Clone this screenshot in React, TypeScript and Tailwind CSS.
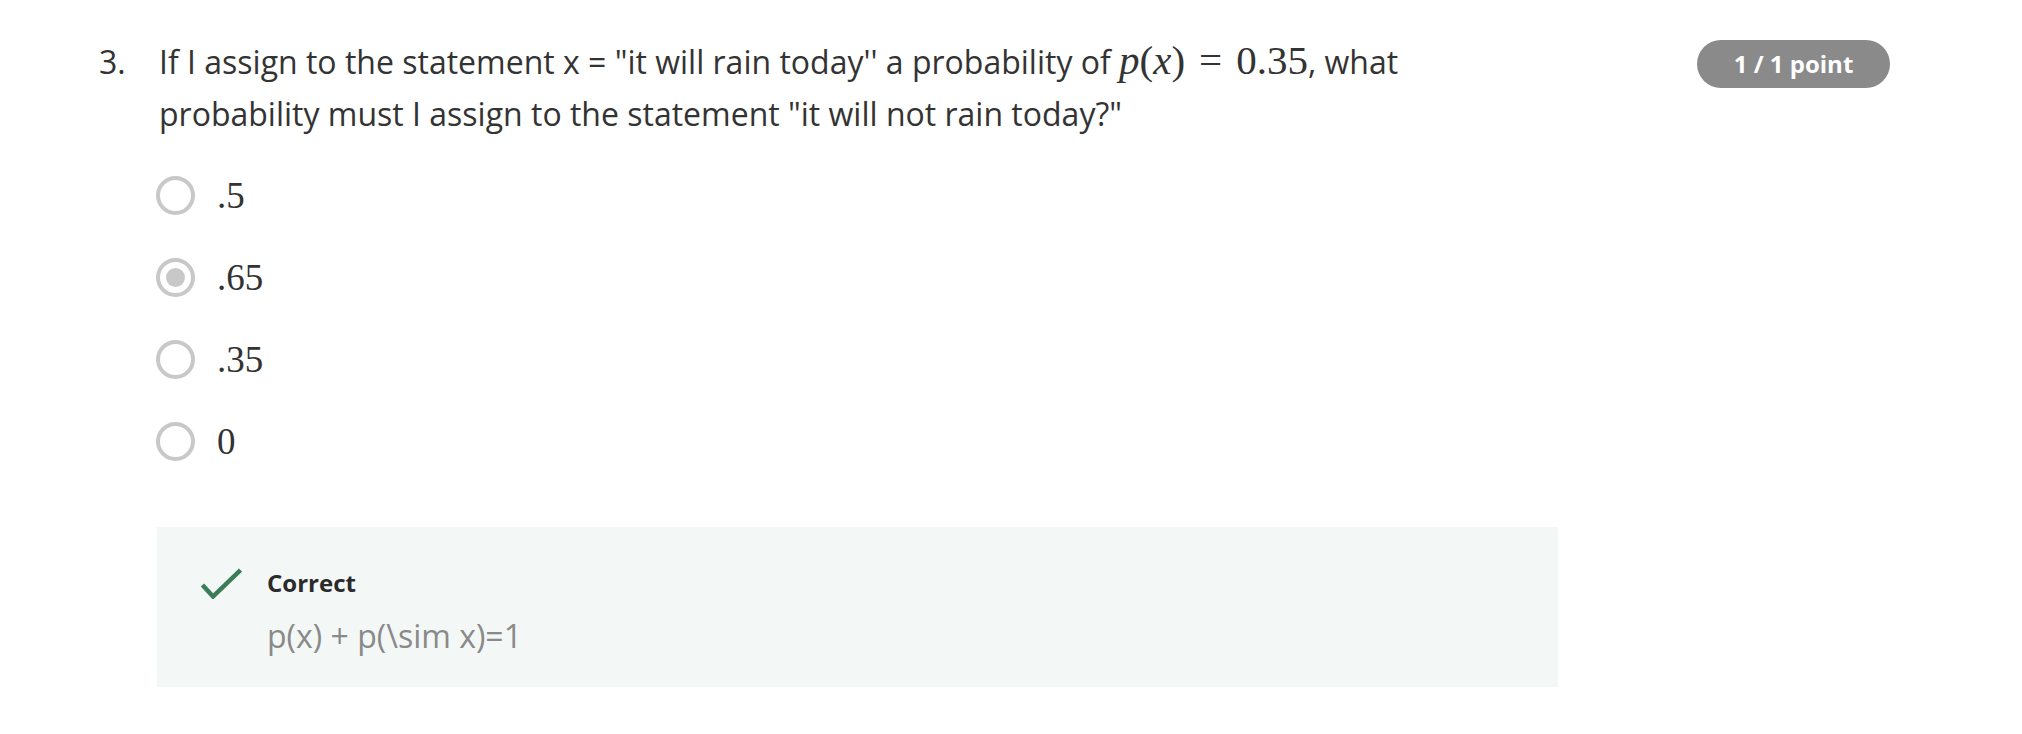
import React from "react";

const options = [
  { label: ".5", selected: false },
  { label: ".65", selected: true },
  { label: ".35", selected: false },
  { label: "0", selected: false },
];

function Radio({ selected }: { selected: boolean }) {
  return (
    <div className="w-[39px] h-[39px] rounded-full border-[4px] border-[#c8c8c8] flex items-center justify-center shrink-0">
      {selected && <div className="w-[19px] h-[19px] rounded-full bg-[#c8c8c8]" />}
    </div>
  );
}

export default function App() {
  return (
    <div className="w-[2022px] h-[734px] bg-white text-[#333333] font-['Open_Sans',sans-serif] overflow-hidden">
      <div className="flex pt-[36px] pl-[99px] pr-[132px]">
        <div className="w-[60px] shrink-0 text-[32px] leading-[52px]">3.</div>
        <div className="flex-1">
          <div className="w-[1290px] text-[32px] leading-[52px]">
            If I assign to the statement x = "it will rain today'' a probability of{" "}
            <span className="font-['Liberation_Serif',serif] text-[41px] leading-[38px] whitespace-nowrap">
              <i>p</i>(<i>x</i>)<span className="px-[14px]">=</span>0.35
            </span>
            , what probability must I assign to the statement "it will not rain today?"
          </div>
          <div className="mt-[14px] ml-[-3px] flex flex-col">
            {options.map((o) => (
              <div key={o.label} className="h-[82px] flex items-center gap-[22px]">
                <Radio selected={o.selected} />
                <span className="font-['Liberation_Serif',serif] text-[37px] leading-none">{o.label}</span>
              </div>
            ))}
          </div>
          <div className="mt-[45px] ml-[-2px] w-[1401px] h-[160px] bg-[#f3f8f6] pl-[44px] pt-[41px] flex">
            <svg width="41" height="31" viewBox="0 0 41 31" className="shrink-0">
              <polyline points="1.5,17 12,28.5 39.5,2" fill="none" stroke="#3b7d57" strokeWidth="4.5" />
            </svg>
            <div className="ml-[25px]">
              <div className="text-[24px] leading-[30px] font-bold text-[#2b2b2b]">Correct</div>
              <div className="mt-[18px] text-[32px] leading-[40px] text-[#8a8a8a]">p(x) + p(\sim x)=1</div>
            </div>
          </div>
        </div>
        <div className="ml-auto mt-[4px] w-[193px] h-[48px] rounded-full bg-[#8a8a8a] text-white font-bold text-[24px] flex items-center justify-center shrink-0">
          1 / 1 point
        </div>
      </div>
    </div>
  );
}
